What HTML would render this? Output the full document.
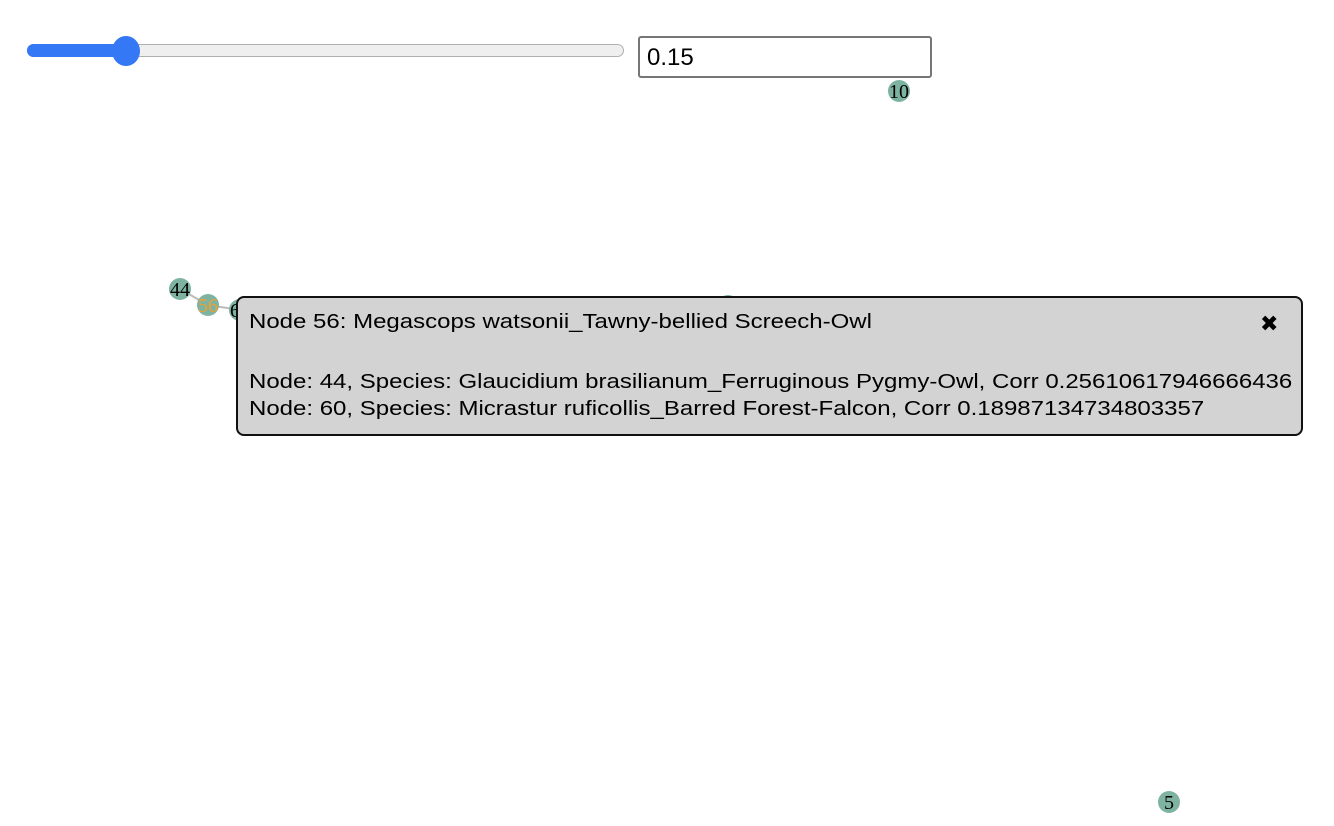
<!DOCTYPE html>
<html><head><style>
body{margin:0;width:1334px;height:826px;background:#fff;position:relative;overflow:hidden;font-family:"Liberation Sans",Arial,sans-serif}
.track{position:absolute;left:27px;top:44px;width:597px;height:13px;border-radius:7px;background:#efefef;border:1px solid #b0b0b0;box-sizing:border-box}
.fill{position:absolute;left:27px;top:44px;width:100px;height:13px;border-radius:7px;background:#3478f6}
.thumb{position:absolute;left:112px;top:36px;width:28px;height:30px;border-radius:50%;background:#3478f6}
.inp{position:absolute;left:638px;top:36px;width:294px;height:42px;border:2px solid #767676;border-radius:3px;box-sizing:border-box;font-size:24px;padding:6px 0 0 7px;color:#000}
.tip{position:absolute;left:236px;top:296px;width:1067px;height:140px;box-sizing:border-box;border:2px solid #111;border-radius:8px;background:#d3d3d3;font-size:20px;color:#000}
.tip div{position:absolute;left:11px;white-space:nowrap;transform:scaleX(1.2);transform-origin:left center}
</style></head><body>
<div class="track"></div><div class="fill"></div><div class="thumb"></div>
<div class="inp">0.15</div>
<svg width="1334" height="826" style="position:absolute;left:0;top:0" font-family="Liberation Serif,serif" font-size="20">
<line x1="180" y1="289" x2="208" y2="305" stroke="#bbb" stroke-width="2"/>
<line x1="208" y1="305" x2="240" y2="310" stroke="#bbb" stroke-width="2"/>
<circle cx="899" cy="91" r="11" fill="#7fb3a1"/><text x="899" y="98" text-anchor="middle">10</text>
<circle cx="180" cy="289" r="11" fill="#7fb3a1"/><text x="180" y="296" text-anchor="middle">44</text>
<circle cx="208" cy="305" r="11" fill="#7fb3a1"/><text x="208" y="312" text-anchor="middle" fill="#f0a030">56</text>
<circle cx="240" cy="310" r="11" fill="#7fb3a1"/><text x="240" y="317" text-anchor="middle">60</text>
<circle cx="728" cy="306" r="11" fill="#7fb3a1"/>
<circle cx="1169" cy="802" r="11" fill="#7fb3a1"/><text x="1169" y="809" text-anchor="middle">5</text>
</svg>
<div class="tip">
<div style="top:13px">Node 56: Megascops watsonii_Tawny-bellied Screech-Owl</div>
<div style="left:1022px;top:13px;font-size:22px;transform:none">✖</div>
<div style="top:73px">Node: 44, Species: Glaucidium brasilianum_Ferruginous Pygmy-Owl, Corr 0.25610617946666436</div>
<div style="top:100px">Node: 60, Species: Micrastur ruficollis_Barred Forest-Falcon, Corr 0.18987134734803357</div>
</div>
</body></html>
